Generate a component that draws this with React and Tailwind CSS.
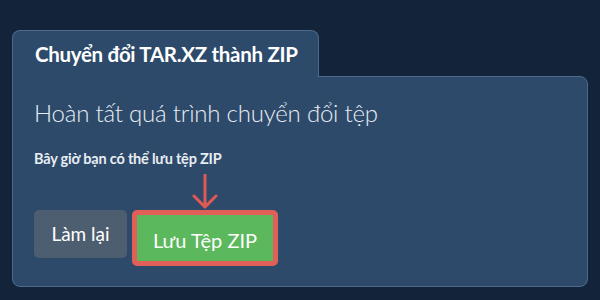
import React from 'react';

const ArrowDown = () => (
  <svg width="26" height="36" viewBox="0 0 26 36" fill="none" className="block">
    <path d="M13 1 V33 M2 22 L13 33 L24 22" stroke="#e05a55" strokeWidth="3" strokeLinecap="round" strokeLinejoin="round" />
  </svg>
);

const App = () => {
  return (
    <div className="w-[600px] h-[300px] bg-[#12233a] px-[12px] pt-[30px] overflow-hidden" style={{ fontFamily: 'Lato, "Noto Sans", sans-serif' }}>
      <div className="w-[576px]">
        <div className="relative z-10 -mb-px w-[307px] h-[47px] bg-[#2d4a6b] border border-b-0 border-[#4d6a8a] rounded-t-[8px] flex items-center pl-[22px]">
          <h1 className="text-[20.5px] font-bold text-white tracking-[-0.3px]">Chuyển đổi TAR.XZ thành ZIP</h1>
        </div>
        <div className="h-[211px] bg-[#2d4a6b] border border-[#4d6a8a] rounded-b-[8px] rounded-tr-[8px] px-[21px] pt-[22px]">
          <h2 className="text-[24px] font-light text-[#e8edf2] leading-[28px] tracking-[-0.2px]">Hoàn tất quá trình chuyển đổi tệp</h2>
          <p className="mt-[22px] text-[14.5px] font-bold text-[#e8edf2] leading-[20px] tracking-[-0.2px]">Bây giờ bạn có thể lưu tệp ZIP</p>
          <div className="pl-[158px] mt-[5px] h-[36px]">
            <ArrowDown />
          </div>
          <div className="flex items-start gap-[5px] mt-0">
            <button className="w-[93px] h-[48px] bg-[#4d5e70] rounded-[5px] text-[19px] text-white">Làm lại</button>
            <div className="border-[5px] border-[#e05f58] rounded-[5px]">
              <button className="w-[136px] h-[46px] bg-[#5cb85c] text-[20px] text-white pt-[3px]">Lưu Tệp ZIP</button>
            </div>
          </div>
        </div>
      </div>
    </div>
  );
};

export default App;
